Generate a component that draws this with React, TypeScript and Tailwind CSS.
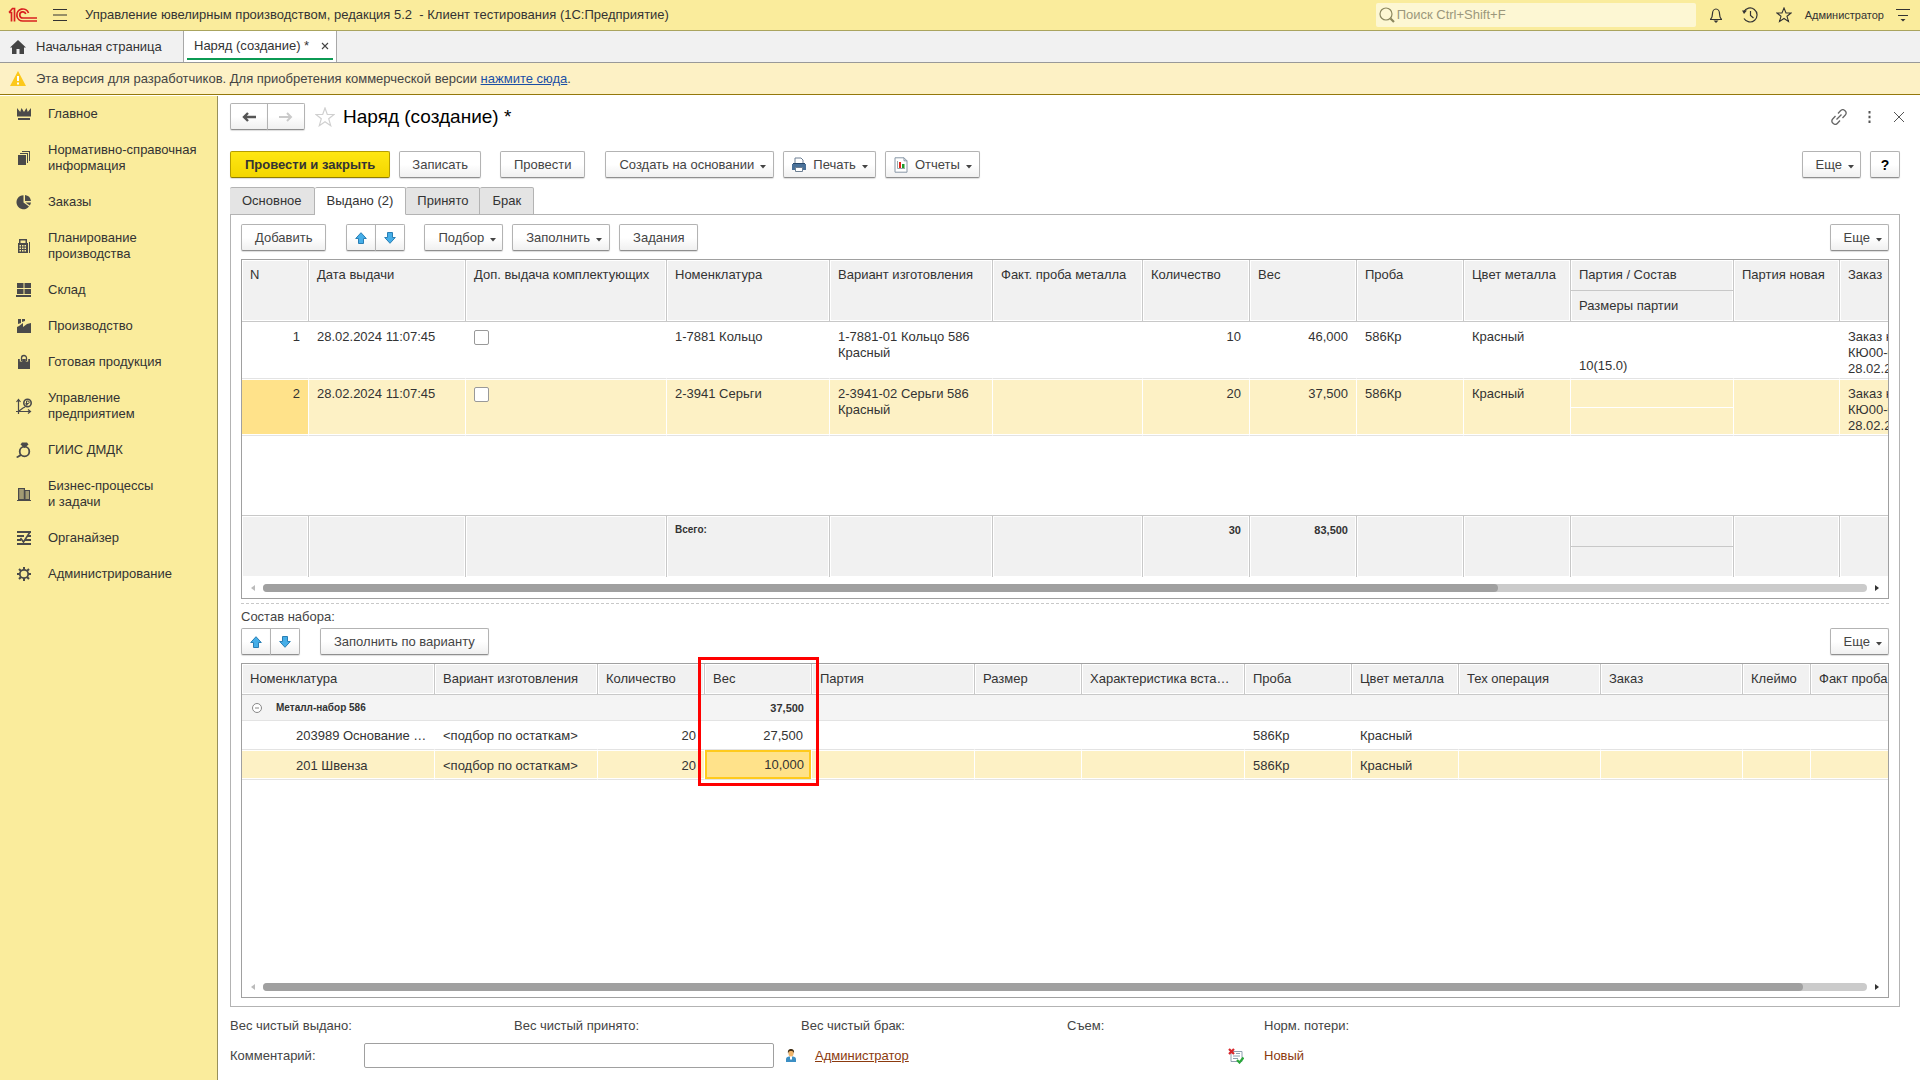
import type { ReactNode } from "react";
import clsx from "clsx";

type Column = { title: string; width: string; sub?: string };

const ISSUED_COLUMNS: Column[] = [
  { title: "N", width: "w-[67px]" },
  { title: "Дата выдачи", width: "w-[157px]" },
  { title: "Доп. выдача комплектующих", width: "w-[201px]" },
  { title: "Номенклатура", width: "w-[163px]" },
  { title: "Вариант изготовления", width: "w-[163px]" },
  { title: "Факт. проба металла", width: "w-[150px]" },
  { title: "Количество", width: "w-[107px]" },
  { title: "Вес", width: "w-[107px]" },
  { title: "Проба", width: "w-[107px]" },
  { title: "Цвет металла", width: "w-[107px]" },
  { title: "Партия / Состав", width: "w-[163px]", sub: "Размеры партии" },
  { title: "Партия новая", width: "w-[106px]" },
  { title: "Заказ", width: "w-[540px]" },
];

const ISSUED_ROWS = [
  { n: 1, date: "28.02.2024 11:07:45", item: "1-7881 Кольцо", variant: "1-7881-01 Кольцо 586 Красный", qty: "10", weight: "46,000", sizes: "10(15.0)" },
  { n: 2, date: "28.02.2024 11:07:45", item: "2-3941 Серьги", variant: "2-3941-02 Серьги 586 Красный", qty: "20", weight: "37,500", sizes: "" },
];

const SET_COLUMNS: Column[] = [
  { title: "Номенклатура", width: "w-[193px]" },
  { title: "Вариант изготовления", width: "w-[163px]" },
  { title: "Количество", width: "w-[107px]" },
  { title: "Вес", width: "w-[107px]" },
  { title: "Партия", width: "w-[163px]" },
  { title: "Размер", width: "w-[107px]" },
  { title: "Характеристика вставки", width: "w-[163px]" },
  { title: "Проба", width: "w-[107px]" },
  { title: "Цвет металла", width: "w-[107px]" },
  { title: "Тех операция", width: "w-[142px]" },
  { title: "Заказ", width: "w-[142px]" },
  { title: "Клеймо", width: "w-[68px]" },
  { title: "Факт проба", width: "w-[150px]" },
];

const SET_ROWS = [
  { item: "203989 Основание серьги", variant: "<подбор по остаткам>", qty: "20", weight: "27,500" },
  { item: "201 Швенза", variant: "<подбор по остаткам>", qty: "20", weight: "10,000" },
];

/* ---------- Section icons ---------- */

function SectionIcon({ children }: { children: ReactNode }) {
  return (
    <svg viewBox="0 0 16 16" className="size-4 shrink-0" fill="#4a4a4a" stroke="none" aria-hidden="true">
      {children}
    </svg>
  );
}

const SECTIONS: { label: string; icon: ReactNode }[] = [
  { label: "Главное", icon: <path d="M1 2l3.200 4L5.500 2l2.500 4 2.500-4 1.300 4L15 2v8.500H1zM2 12h12v2H2z" /> },
  {
    label: "Нормативно-справочная\nинформация",
    icon: <path d="M2 5h8v10H2zM4 3h8v10h-1V4H4zM6 1h8v10h-1V2H6z" />,
  },
  { label: "Заказы", icon: <path d="M7.500 1.200v7.300l5.500 4A7 7 0 1 1 7.500 1.200zM9 1a7 7 0 0 1 6 6H9zM9.500 8.500H15a7 7 0 0 1-1.200 3z" /> },
  {
    label: "Планирование\nпроизводства",
    icon: (
      <>
        <path fillRule="evenodd" d="M3 1h8v4h1v10H2V5h1zM4.500 2.500V5h5V2.500zM3.500 7v1.500H5V7zm2.500 0v1.500h1.500V7zm2.500 0v1.500H10V7zm-5 2.500V11H5V9.500zm2.500 0V11h1.500V9.500zm2.500 0V11H10V9.500zm-5 2.500v1.500H5V12zm2.500 0v1.500h1.500V12zm2.500 0v1.500H10V12z" />
        <path d="M13 4h1v11h-1z" />
      </>
    ),
  },
  { label: "Склад", icon: <path d="M1 1h6.500v5H1zM8.500 1H15v5H8.500zM1 7h6.500v5H1zM8.500 7H15v5H8.500zM0 13h15v2H0z" /> },
  { label: "Производство", icon: <path d="M1 15V9l2-1 4-3v4l4-3 4-1v10zM2 1h3v4L2 6zM6 1h3v2L6 4z" /> },
  {
    label: "Готовая продукция",
    icon: (
      <>
        <path d="M2 5h12v10H2z" />
        <path d="M5 7.500V4a3 3 0 0 1 6 0v3.500" fill="none" stroke="#faec9c" strokeWidth="2.400" />
        <path d="M5.500 7V4a2.500 2.500 0 0 1 5 0v3" fill="none" stroke="#4a4a4a" strokeWidth="1.300" />
      </>
    ),
  },
  {
    label: "Управление\nпредприятием",
    icon: (
      <>
        <path d="M2.500 2v14M0 13.500h14M.5 4l2-2.500 2 2.500M12 11.500l2.500 2-2.500 2M3 13l4-3 2-1" fill="none" stroke="#4a4a4a" strokeWidth="1.200" />
        <circle cx="11.500" cy="5" r="3.700" fill="none" stroke="#4a4a4a" strokeWidth="1.600" />
        <path d="M10.500 7.500V3h1.500a1 1 0 0 1 0 2.500H9.500M9.500 6.800H12" fill="none" stroke="#4a4a4a" />
      </>
    ),
  },
  {
    label: "ГИИС ДМДК",
    icon: (
      <>
        <circle cx="8.500" cy="9.500" r="4.800" fill="none" stroke="#4a4a4a" strokeWidth="1.800" />
        <path d="M6 .5h5l1.500 2L8.500 6l-4-3.500zM4.500 12l1.500 1.500L1.500 16 0 15z" />
      </>
    ),
  },
  {
    label: "Бизнес-процессы\nи задачи",
    icon: <path fillRule="evenodd" d="M2 2h7v2h5v10h1v1H1v-1h1zm1.200 1.500v1h4.600v-1zm0 2v1h4.600v-1zm0 2v1h4.600v-1zm0 2v1h4.600v-1zm0 2v1h4.600v-1zM9.500 5.500v1H13v-1zm0 2v1H13v-1zm0 2v1H13v-1zm0 2v1H13v-1z" />,
  },
  {
    label: "Органайзер",
    icon: (
      <>
        <path d="M1 1h14v2H1zM1 5h7v2H1zM11 5h4v2h-4zM1 9h4v2H1zM9 9h6v2H9zM1 13h14v2H1z" />
        <path d="M4.500 8l3 4L14 2" fill="none" stroke="#4a4a4a" strokeWidth="1.600" />
      </>
    ),
  },
  {
    label: "Администрирование",
    icon: (
      <>
        <circle cx="8" cy="8" r="4.200" fill="none" stroke="#4a4a4a" strokeWidth="1.800" />
        <path d="M8 1v3M8 12v3M1 8h3M12 8h3M3 3l2 2M11 11l2 2M13 3l-2 2M5 11l-2 2" stroke="#4a4a4a" strokeWidth="2" />
      </>
    ),
  },
];

function Logo() {
  return (
    <svg viewBox="0 0 30 16" className="h-4 w-[30px] shrink-0" fill="none" stroke="#d9201f" strokeWidth="1.700" aria-hidden="true">
      <path d="M1 5.500h2.500V14.500M1 5.500L4.500 1.500H6.500V14.500" />
      <path d="M20.500 6A6 6 0 1 0 15 14H29" />
      <path d="M17.800 7A3.100 3.100 0 1 0 15 11H29" />
    </svg>
  );
}

function Caret() {
  return (
    <svg viewBox="0 0 6 4" className="mt-1 h-1 w-1.5 shrink-0" fill="#444" aria-hidden="true">
      <path d="M0 0h6L3 3.500z" />
    </svg>
  );
}

function MoveArrow({ down = false }: { down?: boolean }) {
  return (
    <svg viewBox="0 0 12 12" className={clsx("size-3", down && "rotate-180")} fill="#45aee8" stroke="#2a7fb5" strokeWidth="1" aria-hidden="true">
      <path d="M6 .7L11.300 6.500H8.500v5h-5v-5H.7z" />
    </svg>
  );
}

/* ---------- Controls ---------- */

const BUTTON =
  "flex h-[27px] items-center justify-center rounded-[2px] border border-[#b3b3b3] border-b-[#8f8f8f] bg-linear-to-b from-white from-50% to-[#f0f0f0] text-[#444] whitespace-nowrap shadow-[0_1px_1px_#ddd]";

function Button({ children, menu = false, className = "px-[13px]" }: { children: ReactNode; menu?: boolean; className?: string }) {
  return (
    <button type="button" className={clsx(BUTTON, "gap-1.5", className)}>
      {children}
      {menu && <Caret />}
    </button>
  );
}

function MoveButtons() {
  return (
    <div className="flex">
      <button type="button" aria-label="Переместить вверх" className={clsx(BUTTON, "w-[30px] rounded-r-none")}>
        <MoveArrow />
      </button>
      <button type="button" aria-label="Переместить вниз" className={clsx(BUTTON, "-ml-px w-[30px] rounded-l-none")}>
        <MoveArrow down />
      </button>
    </div>
  );
}

function ScrollBar({ thumb }: { thumb: string }) {
  return (
    <div className="flex h-[21px] shrink-0 items-center gap-2 px-[9px]" aria-hidden="true">
      <svg viewBox="0 0 4 6" className="h-1.5 w-1" fill="#bbb"><path d="M4 0v6L0 3z" /></svg>
      <div className="h-2 flex-1 rounded-full bg-[#cbcbcb]">
        <div className={clsx("h-2 rounded-full bg-[#a0a0a0]", thumb)} />
      </div>
      <svg viewBox="0 0 4 6" className="h-1.5 w-1" fill="#333"><path d="M0 0v6l4-3z" /></svg>
    </div>
  );
}

const HEAD_CELL = "border-r border-b border-[#c8c8c8] bg-[#f1f1f1] p-0 text-left align-top font-normal shadow-[inset_0_0_0_1px_#fff]";

/* ---------- Header bars ---------- */

function TitleBar() {
  return (
    <header className="flex h-[31px] shrink-0 items-center border-b border-[#aaa45e] bg-[#faec9c] pr-[10px] pl-2">
      <Logo />
      <button type="button" aria-label="Меню" className="ml-[15px]">
        <svg viewBox="0 0 14 12" className="h-3 w-3.5" stroke="#333" aria-hidden="true"><path d="M0 .5h14M0 6h14M0 11.500h14" /></svg>
      </button>
      <div className="ml-[18px] whitespace-pre">Управление ювелирным производством, редакция 5.2  - Клиент тестирования (1С:Предприятие)</div>
      <label className="ml-auto flex h-6 w-[320px] items-center gap-0.5 rounded-[2px] bg-[#fdf7d3] px-[3px]">
        <svg viewBox="0 0 16 16" className="size-4" fill="none" stroke="#8b875f" strokeWidth="1.200" aria-hidden="true">
          <circle cx="7" cy="7" r="6" />
          <path d="M11.500 11.500l3.500 3.500" strokeWidth="2.200" />
        </svg>
        <input type="search" aria-label="Поиск" placeholder="Поиск Ctrl+Shift+F" className="min-w-0 flex-1 bg-transparent outline-none placeholder:text-[#9b977c]" />
      </label>
      <button type="button" aria-label="Уведомления" className="ml-3">
        <svg viewBox="0 0 16 16" className="size-4" fill="none" stroke="#333" strokeWidth="1.200" aria-hidden="true">
          <path d="M2 12.500h12M2.500 12.500c1.800-2 2-3.500 2-6A3.500 4.500 0 0 1 8 2a3.500 4.500 0 0 1 3.500 4.500c0 2.500.2 4 2 6" />
          <path d="M5.500 13.500h5L8 16z" fill="#333" stroke="none" />
        </svg>
      </button>
      <button type="button" aria-label="История" className="ml-[18px]">
        <svg viewBox="0 0 16 16" className="size-4" fill="none" stroke="#333" strokeWidth="1.200" aria-hidden="true">
          <path d="M1.800 4.800A7 7 0 1 1 2 11.500M8.500 4v4.500l3 2.500" />
          <path d="M0 3.500h5L2 7z" fill="#333" stroke="none" />
        </svg>
      </button>
      <button type="button" aria-label="Избранное" className="ml-[18px]">
        <svg viewBox="0 0 16 16" className="size-4" fill="none" stroke="#333" strokeWidth="1.100" aria-hidden="true">
          <path d="M8 1l2 5h5l-4 3.300 1.500 5.200L8 11.500l-4.500 3L5 9.300 1 6h5z" />
        </svg>
      </button>
      <span className="ml-[13px] text-[11px]">Администратор</span>
      <button type="button" aria-label="Сервис и настройки" className="ml-3">
        <svg viewBox="0 0 14 13" className="h-[13px] w-3.5" stroke="#333" aria-hidden="true">
          <path d="M0 .5h14M2 6.500h10" />
          <path d="M4.500 10h5L7 12.500z" fill="#333" stroke="none" />
        </svg>
      </button>
    </header>
  );
}

function OpenWindows() {
  return (
    <nav className="flex h-8 shrink-0 border-b border-[#999] bg-[#f1f1f1]">
      <a href="#home" className="flex w-[183px] items-center gap-2.5 pl-2.5">
        <svg viewBox="0 0 16 14" className="h-3.5 w-4" fill="#444" aria-hidden="true"><path d="M8 0l8 7.500h-2V14h-4.500V9h-3v5H2V7.500H0z" /></svg>
        Начальная страница
      </a>
      <div className="flex w-[154px] flex-col border-x border-[#a8a8a8] bg-white px-[3px]">
        <div className="flex flex-1 items-center justify-between pt-0.5 pr-1 pl-[7px]">
          <a href="#order" className="whitespace-nowrap">Наряд (создание) *</a>
          <button type="button" aria-label="Закрыть вкладку">
            <svg viewBox="0 0 8 8" className="size-2" stroke="#444" strokeWidth="1.100" aria-hidden="true"><path d="M1 1l6 6M7 1l-6 6" /></svg>
          </button>
        </div>
        <div className="mb-0.5 h-0.5 bg-[#0b9a53]" />
      </div>
    </nav>
  );
}

function LicenseNotice() {
  return (
    <div className="flex h-8 shrink-0 items-center gap-2.5 border-b border-[#94780c] bg-[#fdf1c5] pl-2.5 text-[#444]">
      <svg viewBox="0 0 16 15" className="h-[15px] w-4" aria-hidden="true">
        <path d="M8 0l8 15H0z" fill="#fcc81b" />
        <path d="M7 5h2v5H7zM7 11.500h2v2H7z" fill="#fff" />
      </svg>
      <p>
        Эта версия для разработчиков. Для приобретения коммерческой версии{" "}
        <a href="#buy" className="text-[#1a4fa5] underline">нажмите сюда</a>.
      </p>
    </div>
  );
}

function Sidebar() {
  return (
    <nav className="w-[218px] shrink-0 border-r border-[#98905a] bg-[#faec9c]">
      {SECTIONS.map((section) => (
        <a key={section.label} href="#section" className="flex items-center gap-4 py-2.5 pl-4 whitespace-pre">
          <SectionIcon>{section.icon}</SectionIcon>
          {section.label}
        </a>
      ))}
    </nav>
  );
}

/* ---------- Tables ---------- */

function IssuedTable() {
  return (
    <div className="flex h-[340px] shrink-0 flex-col justify-between overflow-hidden border border-[#a0a0a0]">
      <table className="w-[2138px] table-fixed border-separate border-spacing-0">
        <thead>
          <tr className="h-[62px]">
            {ISSUED_COLUMNS.map((col) => (
              <th key={col.title} scope="col" className={clsx(HEAD_CELL, col.width)}>
                <div className="px-2 pt-[7px]">{col.title}</div>
                {col.sub && <div className="mt-[7px] border-t border-[#c8c8c8] px-2 pt-[7px]">{col.sub}</div>}
              </th>
            ))}
          </tr>
        </thead>
        <tbody>
          {ISSUED_ROWS.map((row) => {
            const selected = row.n === 2;
            const frame = clsx(
              "border-r border-b border-r-white border-b-[#e3e3e3] align-top",
              selected && "shadow-[inset_0_1px_0_#fff,inset_0_-1px_0_#fff]",
            );
            const cell = clsx(frame, "px-2 pt-[7px]", selected && "bg-[#fdf1c5]");
            return (
              <tr key={row.n} className="h-[57px]">
                <td className={clsx(frame, "px-2 pt-[7px] text-right", selected && "bg-[#ffe28a]")}>{row.n}</td>
                <td className={cell}>{row.date}</td>
                <td className={cell}>
                  <input
                    type="checkbox"
                    aria-label={`Доп. выдача комплектующих, строка ${row.n}`}
                    className="mt-px block size-[15px] appearance-none rounded-[2px] border border-[#999] bg-white"
                  />
                </td>
                <td className={cell}>{row.item}</td>
                <td className={cell}>{row.variant}</td>
                <td className={cell} />
                <td className={clsx(cell, "text-right")}>{row.qty}</td>
                <td className={clsx(cell, "text-right")}>{row.weight}</td>
                <td className={cell}>586Кр</td>
                <td className={cell}>Красный</td>
                <td className={clsx(frame, "p-0", selected && "bg-[#fdf1c5]")}>
                  <div className="mt-7 border-t border-white px-2 pt-[7px]">{row.sizes}</div>
                </td>
                <td className={cell} />
                <td className={cell}>
                  Заказ на
                  <br />
                  КЮ00-0
                  <br />
                  28.02.2024
                </td>
              </tr>
            );
          })}
          <tr className="h-[79px]">
            <td colSpan={13} />
          </tr>
        </tbody>
        <tfoot>
          <tr className="h-[62px] font-bold">
            {ISSUED_COLUMNS.map((col) => (
              <td key={col.title} className="border-t border-r border-[#c8c8c8] bg-[#f1f1f1] p-0 align-top shadow-[inset_0_0_0_1px_#fff]">
                {col.title === "Номенклатура" && <div className="px-2 pt-1.5 text-[10px]">Всего:</div>}
                {col.title === "Количество" && <div className="px-2 pt-1.5 text-right text-[11px]">30</div>}
                {col.title === "Вес" && <div className="px-2 pt-1.5 text-right text-[11px]">83,500</div>}
                {col.sub && <div className="mt-[30px] border-t border-[#c8c8c8]" />}
              </td>
            ))}
          </tr>
        </tfoot>
      </table>
      <ScrollBar thumb="w-[77%]" />
    </div>
  );
}

function SetTable() {
  return (
    <div className="relative flex min-h-[335px] flex-1 flex-col">
      <div className="flex flex-1 flex-col justify-between overflow-hidden border border-[#a0a0a0]">
        <table className="w-[1719px] table-fixed border-separate border-spacing-0">
          <thead>
            <tr className="h-[31px]">
              {SET_COLUMNS.map((col) => (
                <th key={col.title} scope="col" className={clsx(HEAD_CELL, col.width)}>
                  <div className="truncate px-2 pt-[7px]">{col.title}</div>
                </th>
              ))}
            </tr>
          </thead>
          <tbody>
            <tr className="h-[26px] font-bold">
              <td colSpan={3} className="border-b border-[#e3e3e3] bg-[#f4f4f4] px-2.5 text-[10px]">
                <div className="flex items-center gap-3.5">
                  <button type="button" aria-label="Свернуть группу">
                    <svg viewBox="0 0 10 10" className="size-2.5" fill="#fff" stroke="#888" strokeWidth="1" aria-hidden="true">
                      <circle cx="5" cy="5" r="4.500" />
                      <path d="M3 5h4" />
                    </svg>
                  </button>
                  Металл-набор 586
                </div>
              </td>
              <td className="border-b border-[#e3e3e3] bg-[#f4f4f4] px-2 text-right text-[11px]">37,500</td>
              <td colSpan={9} className="border-b border-[#e3e3e3] bg-[#f4f4f4]" />
            </tr>
            {SET_ROWS.map((row, i) => {
              const selected = i === 1;
              const frame = clsx(
                "border-r border-b border-r-white border-b-[#e3e3e3]",
                selected && "bg-[#fdf1c5] shadow-[inset_0_1px_0_#fff,inset_0_-1px_0_#fff]",
              );
              const cell = clsx(frame, "px-2 pt-0.5");
              return (
                <tr key={row.item} className="h-[29px]">
                  <td className={cell}>
                    <div className="-mr-1 truncate pl-[46px]">{row.item}</div>
                  </td>
                  <td className={clsx(cell, "whitespace-nowrap")}>{row.variant}</td>
                  <td className={clsx(cell, "text-right")}>{row.qty}</td>
                  {selected ? (
                    <td className={clsx(frame, "p-0 text-right")}>
                      <div className="border-2 border-[#ffca1c] bg-[#ffe28a] px-[5px] pt-[5px] pb-1">{row.weight}</div>
                    </td>
                  ) : (
                    <td className={clsx(cell, "text-right")}>{row.weight}</td>
                  )}
                  <td className={cell} />
                  <td className={cell} />
                  <td className={cell} />
                  <td className={cell}>586Кр</td>
                  <td className={cell}>Красный</td>
                  <td className={cell} />
                  <td className={cell} />
                  <td className={cell} />
                  <td className={cell} />
                </tr>
              );
            })}
          </tbody>
        </table>
        <ScrollBar thumb="w-[96%]" />
      </div>
      {/* Marker around the weight column */}
      <div className="pointer-events-none absolute -top-1.5 left-[457px] h-[129px] w-[121px] border-3 border-[#ff0000]" />
    </div>
  );
}

/* ---------- Document form ---------- */

function FormHeader() {
  return (
    <div className="flex h-[25px] items-center">
      <button type="button" aria-label="Назад" className={clsx(BUTTON, "w-[38px] rounded-r-none")}>
        <svg viewBox="0 0 14 10" className="h-2.5 w-3.5" fill="none" stroke="#555" strokeWidth="2.400" aria-hidden="true"><path d="M14 5H2M6 1L2 5l4 4" /></svg>
      </button>
      <button type="button" aria-label="Вперед" className={clsx(BUTTON, "-ml-px w-[38px] rounded-l-none")}>
        <svg viewBox="0 0 14 10" className="h-2.5 w-3.5" fill="none" stroke="#cacaca" strokeWidth="2" aria-hidden="true"><path d="M0 5h12M8 1l4 4-4 4" /></svg>
      </button>
      <button type="button" aria-label="Добавить в избранное" className="ml-2.5">
        <svg viewBox="0 0 20 20" className="size-5" fill="none" stroke="#d0d0d0" strokeWidth="1.200" aria-hidden="true">
          <path d="M10 1l2.300 6.500H19l-5.300 4.200 2 7L10 14.700l-5.700 4 2-7L1 7.500h6.700z" />
        </svg>
      </button>
      <h1 className="ml-2 text-[19px] leading-6 text-black">Наряд (создание) *</h1>
      <button type="button" aria-label="Получить ссылку" className="ml-auto">
        <svg viewBox="0 0 16 16" className="size-4" fill="none" stroke="#666" strokeWidth="1.300" aria-hidden="true">
          <path d="M7 4.500l2.500-2.700a3 3 0 0 1 4.600 4.400L11.500 9M9 11.500l-2.500 2.700A3 3 0 0 1 1.900 9.800L4.500 7M5.500 10.500l5-5" />
        </svg>
      </button>
      <button type="button" aria-label="Дополнительно" className="ml-[21px]">
        <svg viewBox="0 0 3 12" className="h-3 w-[3px]" fill="#555" aria-hidden="true"><path d="M.5 0h2v2.500h-2zM.5 4.800h2v2.500h-2zM.5 9.500h2V12h-2z" /></svg>
      </button>
      <button type="button" aria-label="Закрыть" className="-mr-1 ml-[23px]">
        <svg viewBox="0 0 10 10" className="size-2.5" stroke="#555" aria-hidden="true"><path d="M0 0l10 10M10 0L0 10" /></svg>
      </button>
    </div>
  );
}

function CommandBar() {
  return (
    <div className="mt-[22px] flex">
      <button
        type="button"
        className="h-[27px] rounded-[2px] border border-[#b59d00] border-b-[#8f7c00] bg-linear-to-b from-[#ffe712] to-[#f3d600] px-[14px] font-bold whitespace-nowrap text-[#333] shadow-[0_1px_1px_#ddd]"
      >
        Провести и закрыть
      </button>
      <Button className="ml-[9px] px-3">Записать</Button>
      <Button className="ml-[19px] px-[13px]">Провести</Button>
      <Button menu className="ml-5 pr-[7px] pl-[13px]">Создать на основании</Button>
      <Button menu className="ml-[9px] px-[7px]">
        <svg viewBox="0 0 16 16" className="size-4" aria-hidden="true">
          <path d="M4 1h6l2 2v5H4z" fill="#fff" stroke="#6c7f93" />
          <path d="M1 7h14v6H1z" fill="#4a7199" />
          <path d="M2 6.500h12" stroke="#27486b" />
          <path d="M4.500 10.500h7v4h-7z" fill="#fff" stroke="#6c7f93" />
        </svg>
        Печать
      </Button>
      <Button menu className="ml-[9px] px-[7px]">
        <svg viewBox="0 0 16 16" className="size-4" aria-hidden="true">
          <path d="M2 .8h9l3 3v11.400H2z" fill="#fff" stroke="#8796a5" />
          <path d="M11 .8v3h3" fill="none" stroke="#8796a5" />
          <path d="M4.500 4v7.500H12" fill="none" stroke="#9aa" />
          <path d="M6 5h2v6H6z" fill="#e0261c" />
          <path d="M9 7h2.500v4H9z" fill="#1f9d2c" />
        </svg>
        Отчеты
      </Button>
      <Button menu className="ml-auto pr-1.5 pl-[13px]">Еще</Button>
      <button type="button" aria-label="Справка" className={clsx(BUTTON, "ml-[9px] w-[30px] text-[14px] font-bold text-black")}>?</button>
    </div>
  );
}

function DocumentTabs() {
  const tabs = ["Основное", "Выдано (2)", "Принято", "Брак"];
  return (
    <div role="tablist" className="relative z-10 mt-[9px] flex">
      {tabs.map((tab, i) => (
        <button
          key={tab}
          type="button"
          role="tab"
          aria-selected={i === 1}
          className={clsx(
            "-mb-px h-7 rounded-t-[2px] border border-l-0 border-[#b3b3b3] whitespace-nowrap",
            i === 0 && "border-l",
            i === 2 ? "px-[11px]" : "px-3",
            i === 1 ? "border-b-white bg-white" : "bg-[#e4e4e4]",
          )}
        >
          {tab}
        </button>
      ))}
    </div>
  );
}

function FormFooter() {
  return (
    <div className="grid grid-cols-[284px_287px_266px_197px_1fr] gap-y-[7px] pt-[9px] pb-3 text-[#444]">
      <span className="leading-5">Вес чистый выдано:</span>
      <span className="leading-5">Вес чистый принято:</span>
      <span className="leading-5">Вес чистый брак:</span>
      <span className="leading-5">Съем:</span>
      <span className="leading-5">Норм. потери:</span>
      <div className="col-span-2 flex items-center pr-[27px]">
        <label htmlFor="comment" className="w-[134px]">Комментарий:</label>
        <input id="comment" type="text" className="h-[25px] min-w-0 flex-1 rounded-[2px] border border-[#a0a0a0] bg-white px-2 outline-none" />
      </div>
      <div className="relative col-span-2 flex items-center justify-between pl-3.5">
        <a href="#user" className="text-[#8b3a0e] underline">Администратор</a>
        <svg viewBox="0 0 10 13" className="absolute -left-[15px] h-[13px] w-2.5" aria-hidden="true">
          <path d="M0 13V10c0-2 2-2.500 5-2.500S10 8 10 10v3z" fill="#3c8fc4" />
          <path d="M4 7h2v3L5 11l-1-1z" fill="#fff" />
          <ellipse cx="5" cy="4" rx="2.600" ry="3.500" fill="#f0b56c" />
          <path d="M2 4.500C1.500 1 3 0 5 0s3.500 1 3 4.500C7.500 2.500 6.500 2 5 2S2.500 2.500 2 4.500z" fill="#443016" />
        </svg>
        <svg viewBox="0 0 16 16" className="mr-5 size-4" aria-hidden="true">
          <path d="M3 3.500h11v10H3z" fill="#fff" stroke="#8fa0b0" />
          <path d="M5 8h7M5 10.500h5M8 5.500h4" stroke="#8fa0b0" />
          <path d="M1 1l5 5M6 1L1 6" stroke="#d8262c" strokeWidth="2.200" />
          <path d="M9 12l2.500 2.500L15.500 9.500" fill="none" stroke="#2aa83a" strokeWidth="2.200" />
        </svg>
      </div>
      <span className="self-center text-[#8b3a0e]">Новый</span>
    </div>
  );
}

export default function App() {
  return (
    <div className="flex min-h-screen flex-col bg-white font-['Liberation_Sans',Arial,sans-serif] text-[13px] leading-4 text-[#333]">
      <TitleBar />
      <OpenWindows />
      <LicenseNotice />
      <div className="mt-px flex flex-1">
        <Sidebar />
        <main className="flex min-w-0 flex-1 flex-col pt-2 pr-5 pl-3">
          <FormHeader />
          <CommandBar />
          <DocumentTabs />
          <section className="flex min-h-0 flex-1 flex-col border border-[#b3b3b3] px-2.5 pt-[9px] pb-2">
            <div className="mb-2 flex">
              <Button>Добавить</Button>
              <div className="ml-5"><MoveButtons /></div>
              <Button menu className="ml-[19px] pr-1.5 pl-[13px]">Подбор</Button>
              <Button menu className="ml-[9px] pr-[7px] pl-[13px]">Заполнить</Button>
              <Button className="ml-[9px] px-[13px]">Задания</Button>
              <Button menu className="ml-auto pr-1.5 pl-[13px]">Еще</Button>
            </div>
            <IssuedTable />
            <div className="mt-1 border-t border-dashed border-[#c8c8c8]" />
            <h2 className="mt-[5px] mb-[3px] text-[#444]">Состав набора:</h2>
            <div className="mb-2 flex">
              <MoveButtons />
              <Button className="ml-5 px-[13px]">Заполнить по варианту</Button>
              <Button menu className="ml-auto pr-1.5 pl-[13px]">Еще</Button>
            </div>
            <SetTable />
          </section>
          <FormFooter />
        </main>
      </div>
    </div>
  );
}
